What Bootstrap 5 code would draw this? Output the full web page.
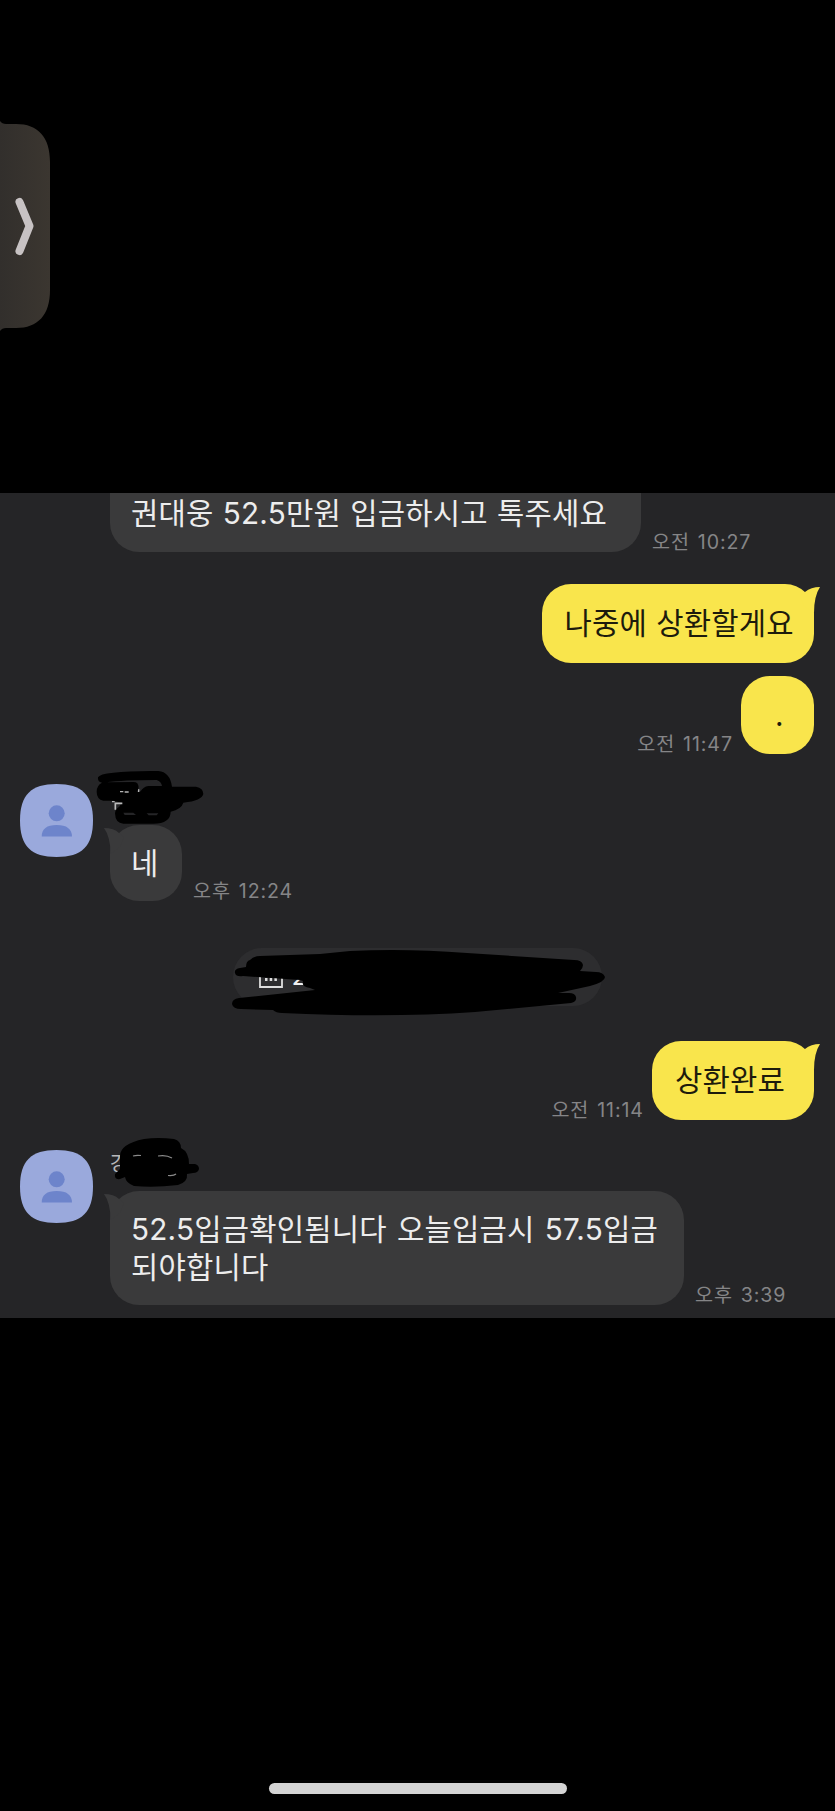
<!DOCTYPE html>
<html lang="ko">
<head>
<meta charset="utf-8">
<meta name="viewport" content="width=device-width, initial-scale=1">
<title>채팅</title>
<link rel="stylesheet" href="https://cdn.jsdelivr.net/npm/bootstrap@5.3.0/dist/css/bootstrap.min.css">
<style>
  body { background:#000; font-family:Inter,"Noto Sans CJK KR",sans-serif; }
  .screen { height:1811px; width:835px; }
  .upper { height:493px; }
  .side-tab { left:0; top:119px; }
  .chat { height:825px; background:#252527; }
  .line { gap:11px; }
  .incoming { padding-left:110px; }
  .mine { padding-right:21px; gap:9px; }
  .bubble { border-radius:29px; font-size:29.7px; line-height:38px; letter-spacing:.2px; word-spacing:.7px; white-space:nowrap; color:#ededed; background:#3a3a3b; padding-left:21px; }
  .bubble.me { background:#f9e54c; color:#1d1b0c; padding-left:23px; height:79px; padding-top:20px; }
  .stamp { color:#858587; font-size:19.6px; line-height:20px; letter-spacing:.9px; word-spacing:1.5px; margin-right:-.9px; white-space:nowrap; }
  .tail-r { right:-6px; top:2px; }
  .tail-l { left:-6.5px; top:2px; }
  .person { padding-left:20px; gap:17px; }
  .person-name { height:41px; font-size:20px; line-height:20px; color:#b8b8ba; }
  .over { left:0; top:0; overflow:visible; z-index:2; }
  .b-first { width:531px; height:59px; border-radius:0 0 29px 29px; padding-top:1px; }
  .b-later { width:272.5px; }
  .bubble.b-dot { width:73px; height:78px; padding-left:34px; }
  .b-yes { width:72px; height:76px; padding-top:19px; }
  .b-done { width:162px; }
  .b-long { width:574px; height:114px; padding-top:19px; word-spacing:1.7px; }
  .date-pill { width:369px; height:58px; border-radius:29px; background:#2d2d2f; margin:47px 0 0 233px; color:#f0f0f0; font-size:22px; }
  .date-pill b { margin-left:59px; font-weight:500; line-height:20px; }
  .home { width:298px; height:11px; background:#d4d4d4; margin-bottom:17px; }
  .gap-13 { margin-top:13px; }
  .gap-30 { margin-top:30px; }
  .gap-32 { margin-top:32px; }
  .gap-35 { margin-top:35px; }
</style>
<script src="https://cdn.jsdelivr.net/npm/bootstrap@5.3.0/dist/js/bootstrap.bundle.min.js"></script>
</head>
<body>
<div class="screen d-flex flex-column overflow-hidden">
  <div class="upper position-relative flex-shrink-0">
    <svg class="side-tab position-absolute" width="52" height="214" viewBox="0 119 52 214">
      <defs><linearGradient id="tabFill"><stop offset="0" stop-color="#322f2c"/><stop offset="1" stop-color="#3b3630"/></linearGradient></defs>
      <path d="M0 121Q2 124 6 124H16C38 124 50 137 50 162V290C50 315 38 328 16 328H6Q2 328 0 331Z" fill="url(#tabFill)"/>
      <path d="M19.500 202L29.500 226L19.500 251" fill="none" stroke="#c7c2c3" stroke-width="8" stroke-linecap="round" stroke-linejoin="round"/>
    </svg>
  </div>

  <main class="chat flex-shrink-0 position-relative">
    <div class="line incoming d-flex align-items-end">
      <div class="bubble b-first">권대웅 52.5만원 입금하시고 톡주세요</div>
      <div class="stamp">오전 10:27</div>
    </div>

    <div class="mine d-flex justify-content-end gap-32">
      <div class="bubble me b-later position-relative">나중에 상환할게요
        <svg class="tail-r position-absolute" width="20" height="30" viewBox="0 0 20 30"><path d="M0 10L5 6Q11 1 20 1Q14 10 14 27L4 20Z" fill="#f9e54c"/></svg>
      </div>
    </div>
    <div class="mine d-flex justify-content-end align-items-end gap-13">
      <div class="stamp">오전 11:47</div>
      <div class="bubble me b-dot">.</div>
    </div>

    <div class="person d-flex gap-30">
      <svg width="73" height="73" viewBox="0 0 73 73"><path d="M36.500 0C62 0 73 11 73 36.500S62 73 36.500 73S0 62 0 36.500S11 0 36.500 0Z" fill="#9aa9dc"/><circle cx="36.700" cy="29.300" r="8" fill="#6d84cb"/><path d="M21.700 52.500Q21.700 41 36.700 41T52 52.500Z" fill="#6d84cb"/></svg>
      <div>
        <div class="person-name position-relative">
          <svg class="over position-absolute" width="100" height="45" viewBox="110 784 100 45">
            <g transform="translate(90 760) scale(.33333)">
              <path d="M24 52Q28 42 70 38Q120 32 205 33Q240 36 246 80H318Q340 84 340 102Q336 122 280 128Q274 148 242 155Q242 190 190 191H100Q76 190 75 160Q76 146 88 140L95 128L70 122H40Q20 118 20 95Q20 76 36 68Q22 66 24 52Z"/>
              <path d="M48 67Q100 60 200 60Q214 64 216 78H175Q160 80 152 94L140 96Q150 84 142 70Q138 66 130 66Z" fill="#252527"/>
              <path d="M100 158H130L138 165H104ZM170 160H205L200 166H176Z" fill="#252527"/>
              <path d="M90 95h10M104 96h12M146 88v8M66 125h8" fill="none" stroke="#b5b5b5" stroke-width="4"/>
              <path d="M76 149V130H97" fill="none" stroke="#bbb" stroke-width="5"/>
            </g>
          </svg>
        </div>
        <div class="line d-flex align-items-end">
          <div class="bubble b-yes position-relative">네
            <svg class="tail-l position-absolute" width="20" height="30" viewBox="0 0 20 30"><path d="M20 10L15 6Q10 1 0 1Q6.500 10 6.500 27L16 20Z" fill="#3a3a3b"/></svg>
          </div>
          <div class="stamp">오후 12:24</div>
        </div>
      </div>
    </div>

    <div class="date-pill position-relative d-flex align-items-center">
      <b>2</b>
      <svg class="over position-absolute" width="369" height="58" viewBox="233 948 369 58">
        <path d="M260 970V987H282V970Z" fill="none" stroke="#dedede" stroke-width="1.800"/>
        <path d="M265 979.500h12" stroke="#dedede" stroke-width="3" stroke-dasharray="2.500 2.200"/>
        <path d="M240 968Q234 969 235 973Q236 977 243 976L300 980L303 981Q301 987 310 988L315 990L239 998Q232 999 232 1004Q233 1009 241 1009L273 1010Q276 1013 282 1013Q390 1018 475 1012L571 1003Q577 1002 576 997Q575 993 569 993H558L590 986Q605 982 605 977Q603 972 596 972L580 971Q583 968 583 965Q582 960 574 960L467 953Q405 948 350 951L320 954L260 956Q254 956 250 960Q246 961 246 967Z"/>
      </svg>
    </div>

    <div class="mine d-flex justify-content-end align-items-end gap-35">
      <div class="stamp">오전 11:14</div>
      <div class="bubble me b-done position-relative">상환완료
        <svg class="tail-r position-absolute" width="20" height="30" viewBox="0 0 20 30"><path d="M0 10L5 6Q11 1 20 1Q14 10 14 27L4 20Z" fill="#f9e54c"/></svg>
      </div>
    </div>

    <div class="person d-flex gap-30">
      <svg width="73" height="73" viewBox="0 0 73 73"><path d="M36.500 0C62 0 73 11 73 36.500S62 73 36.500 73S0 62 0 36.500S11 0 36.500 0Z" fill="#9aa9dc"/><circle cx="36.700" cy="29.300" r="8" fill="#6d84cb"/><path d="M21.700 52.500Q21.700 41 36.700 41T52 52.500Z" fill="#6d84cb"/></svg>
      <div>
        <div class="person-name position-relative"><span class="d-inline-block pt-1">강</span>
          <svg class="over position-absolute" width="100" height="45" viewBox="110 1150 100 45">
            <path d="M120 1156Q120 1144 144 1139Q158 1137 174 1139Q181 1141 181 1148Q189 1152 189 1164H195Q199 1165 199 1169Q198 1173 193 1173L187 1174Q188 1182 178 1185Q154 1188 134 1186Q126 1183 125 1177L120 1179Q114 1180 115 1174L120 1169Z"/>
            <path d="M133 1156Q136 1155 141 1155.500M158 1156Q166 1154.500 172 1158M168 1175.500Q174 1176 176 1174" fill="none" stroke="#8a8a8a" stroke-width="1.200"/>
          </svg>
        </div>
        <div class="line d-flex align-items-end">
          <div class="bubble b-long position-relative">52.5입금확인됨니다 오늘입금시 57.5입금<br>되야합니다
            <svg class="tail-l position-absolute" width="20" height="30" viewBox="0 0 20 30"><path d="M20 10L15 6Q10 1 0 1Q6.500 10 6.500 27L16 20Z" fill="#3a3a3b"/></svg>
          </div>
          <div class="stamp">오후 3:39</div>
        </div>
      </div>
    </div>
  </main>

  <div class="home rounded-pill mx-auto mt-auto flex-shrink-0"></div>
</div>
</body>
</html>
